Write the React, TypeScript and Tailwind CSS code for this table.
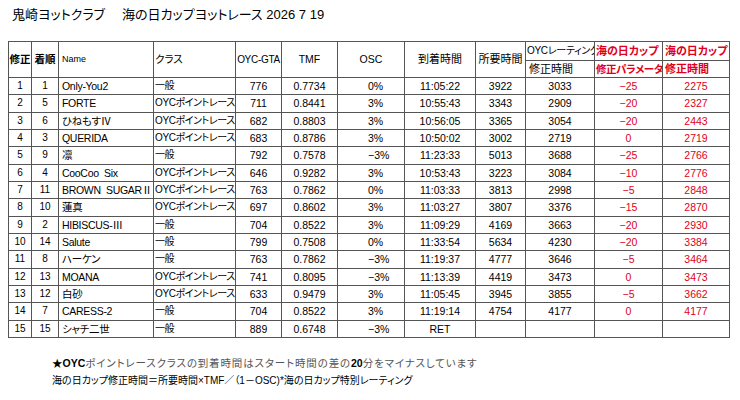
import React from "react";

type Row = [number, number, string, string, string, string, string, string, string, string, string, string];

const ROWS: Row[] = [
  [1, 1, "Only-You2", "一般", "776", "0.7734", "0%", "11:05:22", "3922", "3033", "−25", "2275"],
  [2, 5, "FORTE", "OYCポイントレース", "711", "0.8441", "3%", "10:55:43", "3343", "2909", "−20", "2327"],
  [3, 6, "ひねもすⅣ", "OYCポイントレース", "682", "0.8803", "3%", "10:56:05", "3365", "3054", "−20", "2443"],
  [4, 3, "QUERIDA", "OYCポイントレース", "683", "0.8786", "3%", "10:50:02", "3002", "2719", "0", "2719"],
  [5, 9, "凛", "一般", "792", "0.7578", "−3%", "11:23:33", "5013", "3688", "−25", "2766"],
  [6, 4, "CooCoo\u00a0\u00a0Six", "OYCポイントレース", "646", "0.9282", "3%", "10:53:43", "3223", "3084", "−10", "2776"],
  [7, 11, "BROWN\u00a0\u00a0SUGARⅡ", "OYCポイントレース", "763", "0.7862", "0%", "11:03:33", "3813", "2998", "−5", "2848"],
  [8, 10, "蓮真", "OYCポイントレース", "697", "0.8602", "3%", "11:03:27", "3807", "3376", "−15", "2870"],
  [9, 2, "HIBISCUS-Ⅲ", "一般", "704", "0.8522", "3%", "11:09:29", "4169", "3663", "−20", "2930"],
  [10, 14, "Salute", "一般", "799", "0.7508", "0%", "11:33:54", "5634", "4230", "−20", "3384"],
  [11, 8, "ハーケン", "一般", "763", "0.7862", "−3%", "11:19:37", "4777", "3646", "−5", "3464"],
  [12, 13, "MOANA", "OYCポイントレース", "741", "0.8095", "−3%", "11:13:39", "4419", "3473", "0", "3473"],
  [13, 12, "白砂", "OYCポイントレース", "633", "0.9479", "3%", "11:05:45", "3945", "3855", "−5", "3662"],
  [14, 7, "CARESS-2", "一般", "704", "0.8522", "3%", "11:19:14", "4754", "4177", "0", "4177"],
  [15, 15, "シャチ二世", "一般", "889", "0.6748", "−3%", "RET", "", "", "", ""],
];

// column widths in px, left to right
const COLS = [23, 27, 95, 82, 46, 56, 67, 71, 50, 69, 68, 67];

const cell = "border border-[#555] p-0 whitespace-nowrap overflow-hidden leading-none";
const red = "text-[#e0001b]";

export default function App() {
  return (
    <div className="w-[740px] h-[400px] bg-white text-black font-['Liberation_Sans','Noto_Sans_CJK_JP',sans-serif] [font-feature-settings:'palt'] px-[8px] pt-[7px]">
      {/* Title */}
      <div className="pl-[4px] h-[16px] leading-[16px] text-[13px]">
        鬼崎ヨットクラブ
        <span className="ml-[17px]">海の日カップヨットレース 2026 7 19</span>
      </div>

      {/* Results table */}
      <table className="mt-[18px] table-fixed border-collapse w-[721px] text-[10.5px]">
        <colgroup>
          {COLS.map((w, i) => (
            <col key={i} style={{ width: w }} />
          ))}
        </colgroup>
        <thead>
          <tr className="h-[19px]">
            <th rowSpan={2} className={`${cell} font-bold text-center text-[10.5px]`}>修正</th>
            <th rowSpan={2} className={`${cell} font-bold text-center text-[10.5px]`}>着順</th>
            <th rowSpan={2} className={`${cell} font-normal text-left pl-[3px] text-[9px]`}>Name</th>
            <th rowSpan={2} className={`${cell} font-normal text-left pl-[1px] text-[10.5px]`}>クラス</th>
            <th rowSpan={2} className={`${cell} font-normal text-center text-[10px] tracking-[-0.3px]`}>OYC-GTA</th>
            <th rowSpan={2} className={`${cell} font-normal text-center text-[10.5px]`}>TMF</th>
            <th rowSpan={2} className={`${cell} font-normal text-center text-[10.5px]`}>OSC</th>
            <th rowSpan={2} className={`${cell} font-normal text-center text-[11px]`}>到着時間</th>
            <th rowSpan={2} className={`${cell} font-normal text-center text-[11px]`}>所要時間</th>
            <th className={`${cell} font-normal text-left pl-[1px] text-[10px] tracking-[-0.3px]`}>OYCレーティング</th>
            <th className={`${cell} font-bold text-left pl-[1px] text-[11px] ${red}`}>海の日カップ</th>
            <th className={`${cell} font-bold text-left pl-[2px] text-[11px] ${red}`}>海の日カップ</th>
          </tr>
          <tr className="h-[17px]">
            <th className={`${cell} font-normal text-left pl-[3px] text-[11px]`}>修正時間</th>
            <th className={`${cell} font-bold text-left pl-[1px] text-[10.5px] tracking-[-0.4px] ${red}`}>修正パラメータ</th>
            <th className={`${cell} font-bold text-left pl-[2px] text-[11px] ${red}`}>修正時間</th>
          </tr>
        </thead>
        <tbody>
          {ROWS.map((r) => (
            <tr key={r[0]} className="h-[17.33px]">
              <td className={`${cell} text-center text-[10px]`}>{r[0]}</td>
              <td className={`${cell} text-center text-[10px]`}>{r[1]}</td>
              <td className={`${cell} text-left pl-[3px] text-[10.5px] tracking-[-0.3px]`}>{r[2]}</td>
              <td className={`${cell} text-left pl-[1px] text-[10px] tracking-[-0.4px]`}>{r[3]}</td>
              <td className={`${cell} text-center`}>{r[4]}</td>
              <td className={`${cell} text-center`}>{r[5]}</td>
              <td className={`${cell} text-left pl-[30px]`}>{r[6]}</td>
              <td className={`${cell} text-center`}>{r[7]}</td>
              <td className={`${cell} text-center`}>{r[8]}</td>
              <td className={`${cell} text-center`}>{r[9]}</td>
              <td className={`${cell} text-center ${red}`}>{r[10]}</td>
              <td className={`${cell} text-center ${red}`}>{r[11]}</td>
            </tr>
          ))}
        </tbody>
      </table>

      {/* Notes */}
      <div className="pl-[44px] mt-[17px]">
        <p className="h-[17px] leading-[17px] text-[10.5px] tracking-[0.85px] text-[#555]">
          <span className="font-bold text-black tracking-normal">★OYC</span>
          ポイントレースクラスの到着時間はスタート時間の差の
          <span className="font-bold text-black tracking-normal">20</span>
          分をマイナスしています
        </p>
        <p className="h-[17px] leading-[17px] text-[10px]">
          海の日カップ修正時間＝所要時間×TMF／（1－OSC)*海の日カップ特別レーティング
        </p>
      </div>
    </div>
  );
}
